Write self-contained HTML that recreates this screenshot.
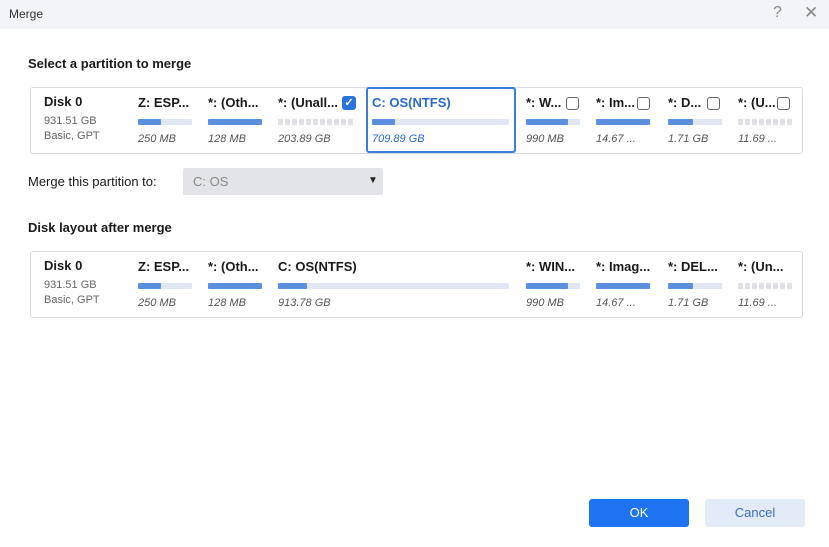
<!DOCTYPE html>
<html><head><style>
*{margin:0;padding:0;box-sizing:border-box}
body{width:829px;height:547px;background:#fff;font-family:"Liberation Sans",sans-serif;position:relative;overflow:hidden;color:#1a1a1a}
.a{position:absolute;white-space:nowrap}
.tb{left:0;top:0;width:829px;height:29px;background:#f3f4f7}
.h{font-size:13px;font-weight:bold;color:#1a1a1a}
.panel{border:1px solid #d8dbe0;border-radius:3px;background:#fff}
.nm{font-size:13px;font-weight:bold}
.sm{font-size:11px;color:#666}
.sz{font-size:11px;font-style:italic;color:#555}
.bar{height:6px;background:#e1e7f2;border-radius:1px}
.bar i{display:block;height:6px;background:#5b8fdf;border-radius:1px}
.dash{height:6px;background:repeating-linear-gradient(90deg,#dfe1e5 0 5px,#fff 5px 7px)}
.cb{width:13px;height:13px;border:1px solid #666;border-radius:3px;background:#fff}
</style></head><body>
<div class="a tb"></div>
<div class="a" style="left:9px;top:7px;font-size:12px;color:#333">Merge</div>
<div class="a" style="left:773px;top:4px;font-size:16px;color:#888">?</div>
<div class="a" style="left:804px;top:3px;font-size:17px;color:#888">✕</div>
<div class="a h" style="left:28px;top:56px">Select a partition to merge</div>

<div class="a panel" style="left:30px;top:87px;width:773px;height:67px"></div>
<div class="a" style="left:366px;top:87px;width:150px;height:66px;border:2px solid #3f7ad6;border-radius:3px"></div>

<div class="a nm" style="left:44px;top:94px">Disk 0</div>
<div class="a sm" style="left:44px;top:115px">931.51 GB</div>
<div class="a sm" style="left:44px;top:130px">Basic, GPT</div>

<div class="a nm" style="left:138px;top:95px">Z: ESP...</div>
<div class="a bar" style="left:138px;top:119px;width:54px"><i style="width:23px"></i></div>
<div class="a sz" style="left:138px;top:133px">250 MB</div>
<div class="a nm" style="left:208px;top:95px">*: (Oth...</div>
<div class="a bar" style="left:208px;top:119px;width:54px"><i style="width:54px"></i></div>
<div class="a sz" style="left:208px;top:133px">128 MB</div>
<div class="a nm" style="left:278px;top:95px">*: (Unall...</div>
<div class="a" style="left:342px;top:96px;width:14px;height:14px;background:#2a73e0;border-radius:3px;color:#fff;font-size:11px;text-align:center;line-height:14px;font-weight:bold">✓</div>
<div class="a dash" style="left:278px;top:119px;width:77px"></div>
<div class="a sz" style="left:278px;top:133px">203.89 GB</div>
<div class="a nm" style="left:372px;top:95px;color:#2a68c9">C: OS(NTFS)</div>
<div class="a bar" style="left:372px;top:119px;width:137px"><i style="width:23px"></i></div>
<div class="a sz" style="left:372px;top:133px;color:#2a68c9">709.89 GB</div>
<div class="a nm" style="left:526px;top:95px">*: W...</div><div class="a cb" style="left:566px;top:97px"></div>
<div class="a bar" style="left:526px;top:119px;width:54px"><i style="width:42px"></i></div>
<div class="a sz" style="left:526px;top:133px">990 MB</div>
<div class="a nm" style="left:596px;top:95px">*: Im...</div><div class="a cb" style="left:637px;top:97px"></div>
<div class="a bar" style="left:596px;top:119px;width:54px"><i style="width:54px"></i></div>
<div class="a sz" style="left:596px;top:133px">14.67 ...</div>
<div class="a nm" style="left:668px;top:95px">*: D...</div><div class="a cb" style="left:707px;top:97px"></div>
<div class="a bar" style="left:668px;top:119px;width:54px"><i style="width:25px"></i></div>
<div class="a sz" style="left:668px;top:133px">1.71 GB</div>
<div class="a nm" style="left:738px;top:95px">*: (U...</div><div class="a cb" style="left:777px;top:97px"></div>
<div class="a dash" style="left:738px;top:119px;width:54px"></div>
<div class="a sz" style="left:738px;top:133px">11.69 ...</div>

<div class="a" style="left:28px;top:174px;font-size:13px">Merge this partition to:</div>
<div class="a" style="left:183px;top:168px;width:200px;height:27px;background:#e2e4e7;border-radius:2px"></div>
<div class="a" style="left:193px;top:174px;font-size:13px;color:#888">C: OS</div>
<div class="a" style="left:368px;top:175px;font-size:10px;color:#222">▼</div>

<div class="a h" style="left:28px;top:220px">Disk layout after merge</div>
<div class="a panel" style="left:30px;top:251px;width:773px;height:67px"></div>
<div class="a nm" style="left:44px;top:258px">Disk 0</div>
<div class="a sm" style="left:44px;top:279px">931.51 GB</div>
<div class="a sm" style="left:44px;top:294px">Basic, GPT</div>
<div class="a nm" style="left:138px;top:259px">Z: ESP...</div>
<div class="a bar" style="left:138px;top:283px;width:54px"><i style="width:23px"></i></div>
<div class="a sz" style="left:138px;top:297px">250 MB</div>
<div class="a nm" style="left:208px;top:259px">*: (Oth...</div>
<div class="a bar" style="left:208px;top:283px;width:54px"><i style="width:54px"></i></div>
<div class="a sz" style="left:208px;top:297px">128 MB</div>
<div class="a nm" style="left:278px;top:259px">C: OS(NTFS)</div>
<div class="a bar" style="left:278px;top:283px;width:231px"><i style="width:29px"></i></div>
<div class="a sz" style="left:278px;top:297px">913.78 GB</div>
<div class="a nm" style="left:526px;top:259px">*: WIN...</div>
<div class="a bar" style="left:526px;top:283px;width:54px"><i style="width:42px"></i></div>
<div class="a sz" style="left:526px;top:297px">990 MB</div>
<div class="a nm" style="left:596px;top:259px">*: Imag...</div>
<div class="a bar" style="left:596px;top:283px;width:54px"><i style="width:54px"></i></div>
<div class="a sz" style="left:596px;top:297px">14.67 ...</div>
<div class="a nm" style="left:668px;top:259px">*: DEL...</div>
<div class="a bar" style="left:668px;top:283px;width:54px"><i style="width:25px"></i></div>
<div class="a sz" style="left:668px;top:297px">1.71 GB</div>
<div class="a nm" style="left:738px;top:259px">*: (Un...</div>
<div class="a dash" style="left:738px;top:283px;width:54px"></div>
<div class="a sz" style="left:738px;top:297px">11.69 ...</div>

<div class="a" style="left:589px;top:499px;width:100px;height:28px;background:#1e74f0;border-radius:3px;color:#fff;font-size:13px;text-align:center;line-height:28px">OK</div>
<div class="a" style="left:705px;top:499px;width:100px;height:28px;background:#e3ebf8;border-radius:3px;color:#3a6fc4;font-size:13px;text-align:center;line-height:28px">Cancel</div>
</body></html>
